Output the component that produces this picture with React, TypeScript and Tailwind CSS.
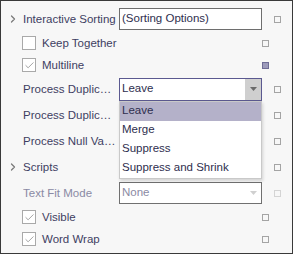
import { Check, ChevronRight } from 'lucide-react';

const font = { fontFamily: '"Liberation Sans", Arial, sans-serif' };

const Marker = ({ filled = false, faint = false }: { filled?: boolean; faint?: boolean }) => (
  <div
    className={
      'w-[7px] h-[7px] border ' +
      (filled
        ? 'bg-[#9d9bbb] border-[#6f6d96]'
        : faint
        ? 'bg-transparent border-[#d4d4d4]'
        : 'bg-transparent border-[#a4a4a4]')
    }
  />
);

const Caret = ({ color }: { color: string }) => (
  <svg width="7" height="4" viewBox="0 0 7 4">
    <path d="M0 0 L7 0 L3.5 4 Z" fill={color} />
  </svg>
);

const EditorRow = ({
  label,
  expandable = false,
  disabled = false,
  children,
}: {
  label: string;
  expandable?: boolean;
  disabled?: boolean;
  children?: React.ReactNode;
}) => (
  <div className="flex items-center h-[26px]">
    <div className="w-[22px] flex justify-center pl-[2px] text-[#7a7a7a]">
      {expandable && <ChevronRight size={12} strokeWidth={2.5} />}
    </div>
    <div
      className={
        'w-[93px] truncate text-[11.5px] leading-[16px] ' + (disabled ? 'text-[#8a8aa4]' : 'text-[#3e3e62]')
      }
    >
      {label}
    </div>
    <div className="w-[3px]" />
    <div className="w-[143px] relative">{children}</div>
    <div className="w-[12px]" />
    <Marker faint={disabled} />
  </div>
);

const CheckRow = ({
  label,
  checked,
  filledMarker = false,
}: {
  label: string;
  checked: boolean;
  filledMarker?: boolean;
}) => (
  <div className="flex items-center h-[22px]">
    <div className="w-[21px]" />
    <div className="w-[14px] h-[14px] bg-white border border-[#a9a9a9] flex items-center justify-center text-[#9a9a9a]">
      {checked && <Check size={11} strokeWidth={2} />}
    </div>
    <div className="w-[6px]" />
    <div className="w-[220px] text-[11.5px] leading-[16px] text-[#3e3e62]">{label}</div>
    <Marker filled={filledMarker} />
  </div>
);

export default function App() {
  return (
    <div
      className="w-[293px] h-[254px] border border-[#3a3a3a] bg-[#f7f7f7] pt-[5px] overflow-hidden"
      style={font}
    >
      <EditorRow label="Interactive Sorting" expandable>
        <div className="h-[22px] bg-white border border-[#6e6e6e] flex items-center pl-[2px] text-[11.5px] text-[#2e2e4e]">
          (Sorting Options)
        </div>
      </EditorRow>
      <CheckRow label="Keep Together" checked={false} />
      <CheckRow label="Multiline" checked filledMarker />
      <EditorRow label="Process Duplicates">
        <div className="relative z-10">
          <div className="h-[23px] bg-white border border-[#5b5990] flex items-center">
            <div className="flex-1 pl-[2px] text-[11.5px] text-[#2e2e4e]">Leave</div>
            <div className="w-[16px] h-full bg-[#cfcfcf] flex items-center justify-center">
              <Caret color="#6a6a6a" />
            </div>
          </div>
          <div className="absolute left-0 top-full w-[143px] bg-white border border-[#c9c9c9] shadow-[1px_2px_3px_rgba(0,0,0,0.15)] text-[11.5px] text-[#2e2e4e]">
            <div className="h-[19px] flex items-center pl-[2px] bg-[#b4b1c9]">Leave</div>
            <div className="h-[19px] flex items-center pl-[2px]">Merge</div>
            <div className="h-[19px] flex items-center pl-[2px]">Suppress</div>
            <div className="h-[19px] flex items-center pl-[2px]">Suppress and Shrink</div>
          </div>
        </div>
      </EditorRow>
      <EditorRow label="Process Duplicates Target" />
      <EditorRow label="Process Null Values" />
      <EditorRow label="Scripts" expandable />
      <EditorRow label="Text Fit Mode" disabled>
        <div className="h-[22px] bg-white border border-[#707070] flex items-center">
          <div className="flex-1 pl-[2px] text-[11.5px] text-[#8a8aa4]">None</div>
          <div className="w-[16px] flex items-center justify-center">
            <Caret color="#d0d0d0" />
          </div>
        </div>
      </EditorRow>
      <CheckRow label="Visible" checked />
      <CheckRow label="Word Wrap" checked />
    </div>
  );
}
